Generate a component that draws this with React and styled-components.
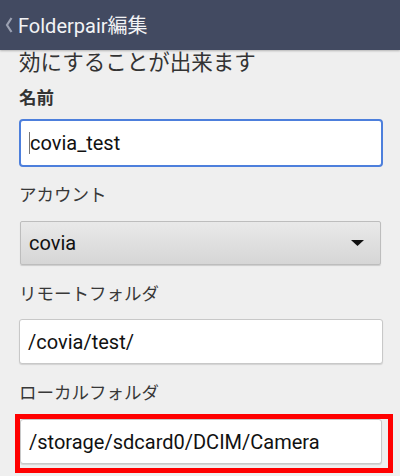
import React from 'react';
import styled, { createGlobalStyle, css } from 'styled-components';

const GlobalStyle = createGlobalStyle`
    html, body {
        margin: 0;
        padding: 0;
        background: #efefef;
    }
    body {
        font-family: Roboto, "Noto Sans CJK JP", sans-serif;
        color: #222;
    }
`;

const Screen = styled.div`
    width: 400px;
    height: 476px;
    overflow: hidden;
    background: #efefef;
`;

const ActionBar = styled.div`
    height: 50px;
    background: #424a61;
    display: flex;
    align-items: center;
    box-shadow: 0 1px 2px rgba(0, 0, 0, 0.25);
    position: relative;
    z-index: 1;
`;

const BackChevron = styled.svg`
    width: 18px;
    height: 18px;
    flex-shrink: 0;
`;

const Title = styled.span`
    color: #f2f3f5;
    font-size: 20px;
    margin-top: -1px;
`;

const Content = styled.div`
    padding: 0 17px 0 19px;
`;

const Hint = styled.div`
    font-size: 21.5px;
    line-height: 26px;
    color: #333;
`;

const Label = styled.div`
    font-size: 17.5px;
    line-height: 22px;
    color: #383838;
    ${({ bold }) => bold && css`
        font-weight: bold;
        color: #333;
    `}
    margin-top: ${({ top }) => top}px;
`;

const getInputStyle = (variant) => {
    switch (variant) {
        case 'focused':
            return css`
                border: 2px solid #4d7fdc;
                border-radius: 4px;
            `;
        default:
            return css`
                border: 1px solid #c8c8c8;
                border-radius: 3px;
                box-shadow: 0 1px 1px rgba(0, 0, 0, 0.12);
            `;
    }
};

const TextField = styled.div`
    box-sizing: border-box;
    height: ${({ h }) => h}px;
    margin-top: ${({ top }) => top}px;
    background: #fff;
    display: flex;
    align-items: center;
    padding-left: 8px;
    font-size: 20px;
    color: #111;
    ${({ variant }) => getInputStyle(variant)};
`;

const Caret = styled.span`
    width: 1px;
    height: 22px;
    background: #777;
`;

const Spinner = styled.div`
    box-sizing: border-box;
    height: 44px;
    margin: 15px 2px 0 1px;
    background: linear-gradient(#e9e9e9, #d6d6d6);
    border: 1px solid #bdbdbd;
    border-radius: 2px;
    box-shadow: 0 1px 1px rgba(0, 0, 0, 0.15);
    display: flex;
    align-items: center;
    justify-content: space-between;
    padding: 0 16px 0 8px;
    font-size: 20px;
    color: #111;
`;

const Highlight = styled.div`
    margin: 10px -10px 0 -4px;
    border: 5px solid #f00;
    padding: 0 6px 4px 0;
`;

export default function App() {
    return (
        <Screen>
            <GlobalStyle />
            <ActionBar>
                <BackChevron viewBox="0 0 18 18">
                    <path d="M11.5 2 L7 9 L11.5 16" stroke="#9ba1b2" strokeWidth="2.2" fill="none" />
                </BackChevron>
                <Title>Folderpair編集</Title>
            </ActionBar>
            <Content>
                <Hint>効にすることが出来ます</Hint>
                <Label bold top={11}>名前</Label>
                <TextField variant="focused" h={48} top={10}>
                    <Caret />covia_test
                </TextField>
                <Label top={17}>アカウント</Label>
                <Spinner>
                    covia
                    <svg width="13" height="6" viewBox="0 0 13 6">
                        <path d="M0 0 H13 L6.5 6 Z" fill="#111" />
                    </svg>
                </Spinner>
                <Label top={18}>リモートフォルダ</Label>
                <TextField h={45} top={14}>/covia/test/</TextField>
                <Label top={18}>ローカルフォルダ</Label>
                <Highlight>
                    <TextField h={45} top={0}>/storage/sdcard0/DCIM/Camera</TextField>
                </Highlight>
            </Content>
        </Screen>
    );
}
